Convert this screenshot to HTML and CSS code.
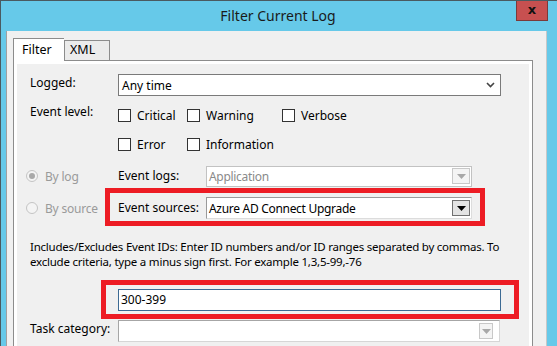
FILE: index.html
```html
<!DOCTYPE html>
<html lang="en">
<head>
  <meta charset="UTF-8">
  <link rel="stylesheet" href="styles.css">
  <title>Filter Current Log</title>
</head>
<body>

<div class="window">
  <div class="titlebar">
    <span></span>
    <span class="title">Filter Current Log</span>
    <span class="close">x</span>
  </div>

  <div class="client">
    <div class="tabs">
      <div class="tab active">Filter</div>
      <div class="tab">XML</div>
    </div>

    <div class="panel">
      <div class="panel-inner">

        <!-- Logged -->
        <div class="row logged">
          <label class="lbl">Logged:</label>
          <div class="combo">
            <span>Any time</span>
            <svg class="chev" width="9" height="6" viewBox="0 0 9 6"><path d="M1 1 L4.5 4.5 L8 1" fill="none" stroke="#444" stroke-width="1.6"/></svg>
          </div>
        </div>

        <!-- Event level -->
        <div class="row level">
          <label class="lbl">Event level:</label>
          <div class="checks">
            <div class="chk"><span class="box"></span>Critical</div>
            <div class="chk"><span class="box"></span>Warning</div>
            <div class="chk"><span class="box"></span>Verbose</div>
            <div class="chk"><span class="box"></span>Error</div>
            <div class="chk"><span class="box"></span>Information</div>
          </div>
        </div>

        <!-- By log / By source -->
        <div class="pick-row">
          <div class="radio"><span class="dot checked"></span>By log</div>
          <label class="lbl2">Event logs:</label>
          <div class="combo2 disabled">
            <span>Application</span>
            <span class="drop"><svg width="9" height="5" viewBox="0 0 9 5"><path d="M0 0 H9 L4.5 5 Z" fill="#a8a8a8"/></svg></span>
          </div>
        </div>

        <div class="pick-row">
          <div class="radio"><span class="dot"></span>By source</div>
          <div class="marked">
            <label class="lbl2">Event sources:</label>
            <div class="combo2">
              <span>Azure AD Connect Upgrade</span>
              <span class="drop"><svg width="9" height="5" viewBox="0 0 9 5"><path d="M0 0 H9 L4.5 5 Z" fill="#000"/></svg></span>
            </div>
            <span class="redbox one"></span>
          </div>
        </div>

        <p class="help">Includes/Excludes Event IDs: Enter ID numbers and/or ID ranges separated by commas. To exclude criteria, type a minus sign first. For example 1,3,5-99,-76</p>

        <div class="ids">
          <div class="textbox">300-399</div>
          <span class="redbox two"></span>
        </div>

        <div class="row task">
          <label class="lbl">Task category:</label>
          <div class="combo3">
            <span class="drop"><svg width="9" height="5" viewBox="0 0 9 5"><path d="M0 0 H9 L4.5 5 Z" fill="#a8a8a8"/></svg></span>
          </div>
        </div>

      </div>
    </div>
  </div>
</div>

</body>
</html>
```

FILE: styles.css
```css
body {
  margin: 0;
  font-family: "Noto Sans", "Open Sans", sans-serif;
  font-size: 12px;
  color: #000;
  background: #66c9e9;
}

.window {
  width: 557px;
  height: 346px;
  overflow: hidden;
  background: #66c9e9;
  box-sizing: border-box;
  border-top: 1px solid #4a5a60;
  border-left: 1px solid #4a5a60;
}

.titlebar {
  height: 30px;
  display: grid;
  grid-template-columns: 1fr auto 1fr;
  align-items: start;
}

.title {
  font-size: 14px;
  line-height: 30px;
  color: #1a1a1a;
  padding-right: 2px;
}

.close {
  justify-self: end;
  margin-right: 9px;
  width: 30px;
  height: 20px;
  margin-top: -1px;
  background: #c75050;
  border: 1px solid #7b3a3a;
  border-top: none;
  text-align: center;
  font-family: "DejaVu Sans", sans-serif;
  font-weight: bold;
  font-size: 13px;
  line-height: 19px;
  color: #111;
}

.client {
  margin-left: 5px;
  width: 541px;
  height: 320px;
  box-sizing: border-box;
  background: #f0f0f0;
  border-left: 1px solid #a0a0a0;
  border-right: 1px solid #c8c8c8;
  padding: 7px 0 0 6px;
}

/* tabs */
.tabs {
  display: flex;
  align-items: flex-end;
  height: 22px;
}

.tab {
  height: 20px;
  line-height: 18px;
  padding: 0 5px;
  box-sizing: border-box;
  border: 1px solid #8c8c8c;
  border-bottom: none;
  background: #ebebeb;
  width: 46px;
  font-size: 12.5px;
}

.tab.active {
  width: 51px;
  height: 24px;
  line-height: 22px;
  padding-left: 8px;
  background: #fff;
  margin-bottom: -2px;
  position: relative;
  z-index: 1;
  border-right: none;
}

.panel {
  width: 520px;
  height: 300px;
  box-sizing: border-box;
  border: 1px solid #8c8c8c;
  background: #fff;
  padding: 3px;
}

.panel-inner {
  background: #f0f0f0;
  height: 100%;
  padding: 10px 0 0 13px;
  box-sizing: border-box;
}

/* rows */
.row {
  display: flex;
  align-items: flex-start;
}

.lbl {
  width: 88px;
  flex: none;
  line-height: 16px;
  padding-top: 1px;
}

.combo {
  width: 383px;
  height: 22px;
  box-sizing: border-box;
  border: 1px solid #7a7a7a;
  background: #fff;
  display: flex;
  align-items: center;
  justify-content: space-between;
  padding: 0 5px 0 3px;
}

.level {
  margin-top: 11px;
}

.level .lbl {
  padding-top: 0;
  margin-top: -3px;
}

.checks {
  display: grid;
  grid-template-columns: 69px 95px auto;
  row-gap: 12px;
}

.chk {
  display: flex;
  align-items: center;
  height: 17px;
  gap: 6px;
}

.box {
  width: 13px;
  height: 13px;
  box-sizing: border-box;
  border: 1px solid #333;
  background: #fff;
}

.pick-row {
  display: flex;
  align-items: center;
  height: 22px;
  margin-left: -4px;
  margin-top: 12px;
}

.pick-row + .pick-row {
  margin-top: 10px;
}

.radio {
  width: 92px;
  flex: none;
  display: flex;
  align-items: center;
  gap: 7px;
  color: #9a9a9a;
  letter-spacing: -0.2px;
}

.dot {
  width: 12px;
  height: 12px;
  box-sizing: border-box;
  border-radius: 50%;
  border: 1px solid #c4c4c4;
  background: #f4f4f4;
  display: flex;
  align-items: center;
  justify-content: center;
}

.dot.checked::after {
  content: "";
  width: 6px;
  height: 6px;
  border-radius: 50%;
  background: #a9a9a9;
}

.lbl2 {
  width: 88px;
  flex: none;
  margin-top: -2px;
}

.marked {
  display: flex;
  align-items: center;
  position: relative;
}

.combo2 {
  width: 266px;
  height: 22px;
  box-sizing: border-box;
  border: 1px solid #9a9a9a;
  border-right-color: #dcdcdc;
  border-bottom-color: #dcdcdc;
  background: #fff;
  display: flex;
  align-items: center;
  justify-content: space-between;
  padding: 0 0 0 2px;
  letter-spacing: -0.3px;
}

.combo2.disabled {
  height: 21px;
  border-color: #c2c2c2;
  color: #8a8a8a;
}

.drop {
  width: 18px;
  height: 16px;
  margin-right: 1px;
  box-sizing: border-box;
  border: 1px solid #707070;
  background: #e3e3e3;
  display: flex;
  align-items: center;
  justify-content: center;
}

.disabled .drop,
.combo3 .drop {
  border-color: #c8c8c8;
  background: #f4f4f4;
}

.redbox {
  position: absolute;
  border: 5px solid #ed1c24;
  pointer-events: none;
}

.redbox.one {
  top: -9px;
  left: -13px;
  right: -13px;
  bottom: -7px;
}

.help {
  margin: 20px 0 0;
  line-height: 15px;
  width: 490px;
  font-size: 11.5px;
  letter-spacing: -0.22px;
}

.ids {
  position: relative;
  margin: 20px 0 0 88px;
  width: 383px;
}

.textbox {
  height: 22px;
  box-sizing: border-box;
  border: 1px solid #3c6a93;
  background: #fff;
  line-height: 20px;
  padding-left: 2px;
}

.redbox.two {
  top: -9px;
  left: -17px;
  right: -18px;
  bottom: -8px;
}

.task {
  margin-top: 9px;
}

.combo3 {
  width: 382px;
  height: 22px;
  box-sizing: border-box;
  border: 1px solid #a6a6a6;
  border-right-color: #d6d6d6;
  border-bottom-color: #d6d6d6;
  background: #fff;
  display: flex;
  align-items: center;
  justify-content: flex-end;
  padding-right: 5px;
}

.combo3 .drop {
  width: 14px;
}
```
